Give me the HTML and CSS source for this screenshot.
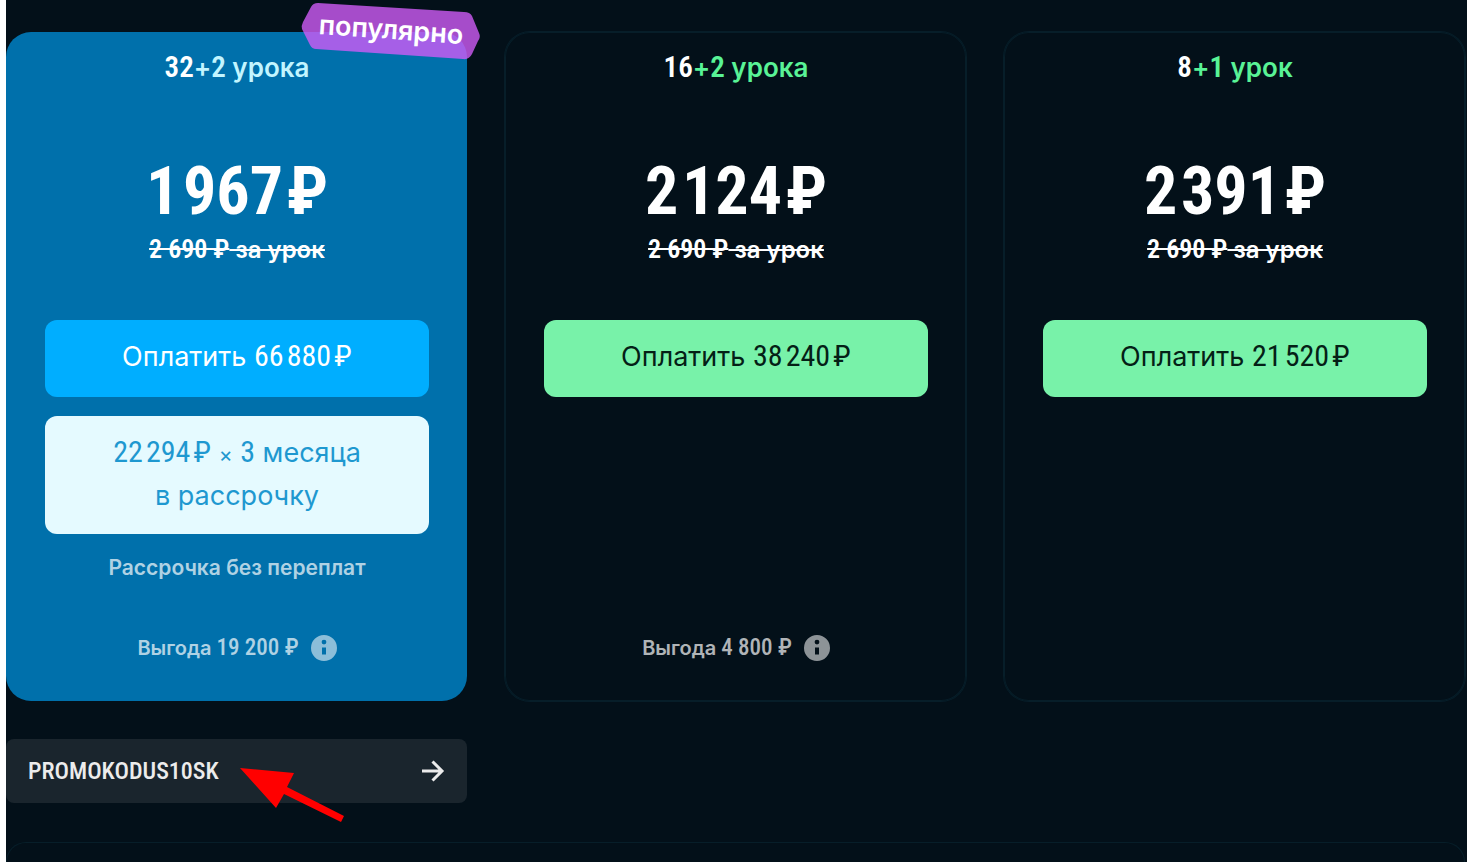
FILE: index.html
```html
<!DOCTYPE html>
<html lang="ru">
<head>
<meta charset="utf-8">
<meta name="viewport" content="width=device-width, initial-scale=1">
<title>Выбор пакета уроков</title>
<link rel="stylesheet" href="styles.css">
</head>
<body>
<main class="page">
  <section class="plans">
    <article class="plan plan-popular">
      <div class="badge">
        <svg class="badge-shape" viewBox="0 0 180 58" aria-hidden="true"><path d="M17 1 L163 10 Q169 10 171 14 L178 31 Q180 35 177 39 L171 52 Q168 58 162 57 L15 47 Q11 47 9 43 L1 27 Q0 24 2 20 L10 5 Q12 1 17 1Z"/></svg>
        <span class="badge-text">популярно</span>
      </div>
      <h2 class="title"><span class="num">32</span><span class="bonus">+<span class="num">2</span> урока</span></h2>
      <p class="price">1<span class="gap"> </span>967<span class="gap"> </span>₽</p>
      <p class="old"><s><span class="num">2 690 ₽</span> за урок</s></p>
      <div class="actions">
        <button class="btn btn-blue" type="button">Оплатить <span class="num">66&#8202;880&#8202;₽</span></button>
        <button class="btn btn-light" type="button"><span class="num">22&#8202;294&#8202;₽</span> <span class="times">×</span> <span class="num">3</span> месяца<br>в рассрочку</button>
      </div>
      <p class="note">Рассрочка без переплат</p>
      <p class="benefit"><span>Выгода <span class="num">19 200 ₽</span></span>
        <svg class="info" viewBox="0 0 26 26" aria-hidden="true"><path fill-rule="evenodd" d="M13 0a13 13 0 1 1 0 26a13 13 0 1 1 0-26ZM13 4.700a2.400 2.400 0 1 0 0 4.800a2.400 2.400 0 1 0 0-4.800ZM11 12.500V19.500H15V12.500Z"/></svg>
      </p>
    </article>
    <article class="plan">
      <h2 class="title"><span class="num">16</span><span class="bonus">+<span class="num">2</span> урока</span></h2>
      <p class="price">2<span class="gap"> </span>124<span class="gap"> </span>₽</p>
      <p class="old"><s><span class="num">2 690 ₽</span> за урок</s></p>
      <div class="actions">
        <button class="btn" type="button">Оплатить <span class="num">38&#8202;240&#8202;₽</span></button>
      </div>
      <p class="benefit"><span>Выгода <span class="num">4 800 ₽</span></span>
        <svg class="info" viewBox="0 0 26 26" aria-hidden="true"><path fill-rule="evenodd" d="M13 0a13 13 0 1 1 0 26a13 13 0 1 1 0-26ZM13 4.700a2.400 2.400 0 1 0 0 4.800a2.400 2.400 0 1 0 0-4.800ZM11 12.500V19.500H15V12.500Z"/></svg>
      </p>
    </article>
    <article class="plan">
      <h2 class="title"><span class="num">8</span><span class="bonus">+<span class="num">1</span> урок</span></h2>
      <p class="price">2<span class="gap"> </span>391<span class="gap"> </span>₽</p>
      <p class="old"><s><span class="num">2 690 ₽</span> за урок</s></p>
      <div class="actions">
        <button class="btn" type="button">Оплатить <span class="num">21&#8202;520&#8202;₽</span></button>
      </div>
    </article>
  </section>
  <div class="promo-row">
    <form class="promo">
      <input class="promo-input" type="text" value="PROMOKODUS10SK" aria-label="Промокод">
      <button class="promo-go" type="button" aria-label="Применить">
        <svg class="promo-icon" viewBox="0 0 24 24" aria-hidden="true"><path d="M1 12H20M11.500 2.500L21 12L11.500 21.500"/></svg>
      </button>
      <svg class="pointer" viewBox="0 0 104 56" aria-hidden="true"><path d="M0 1L54 6L47 20L104 49L101 55L44 27L36 41Z"/></svg>
    </form>
  </div>
  <section class="panel"></section>
</main>
</body>
</html>
```
FILE: styles.css
```css
* { box-sizing: border-box; }

body {
  margin: 0;
  background: #fff;
  font-family: Inter, "Open Sans", sans-serif;
  color: #fff;
}

h2, p { margin: 0; }

.page {
  min-height: 100vh;
  margin-left: 6px;
  padding: 32px 2px 0 0;
  background: #031019;
}

.plans, .promo-row {
  display: grid;
  grid-template-columns: repeat(3, 1fr);
  column-gap: 38px;
}

.plan {
  position: relative;
  display: flex;
  flex-direction: column;
  padding: 16px 38px 32px 39px;
  border-radius: 25px;
  box-shadow: 0 0 0 1px #071e29, inset 0 0 0 1px #071e29;
  text-align: center;
  --bonus: #59f396;
}

.plan-popular {
  background: #0070ab;
  box-shadow: none;
  --bonus: #c2f5ff;
}

.num {
  font-family: "Roboto Condensed", "Liberation Sans Narrow", Roboto, sans-serif;
  font-size: 30px;
  line-height: 1;
}

.title {
  font-size: 26px;
  font-weight: 600;
  line-height: 40px;
}

.title .num { font-size: 29px; }

.bonus { color: var(--bonus); }

.price {
  margin-top: 64px;
  font-family: "Roboto Condensed", "Liberation Sans Narrow", Roboto, sans-serif;
  font-size: 66px;
  font-weight: 700;
  line-height: 80px;
}

.gap {
  font-size: 16px;
  line-height: 1;
}

.old {
  margin-top: 2px;
  font-size: 24px;
  font-weight: 600;
  line-height: 32px;
}

.old .num { font-size: 26px; }

.old s { text-decoration-thickness: 2px; }

.actions {
  display: grid;
  gap: 19px;
  margin-top: 54px;
}

.btn {
  padding: 15px 12px 19px;
  border: 0;
  border-radius: 12px;
  background: #78f2a9;
  color: #042016;
  font-family: inherit;
  font-size: 27px;
  line-height: 43px;
}

.btn-blue {
  background: #00aeff;
  color: #fff;
}

.btn-light {
  padding: 15px 12px 17px;
  background: #e5faff;
  color: #1e98d0;
}

.times {
  font-size: 21px;
  line-height: 1;
}

.note {
  margin-top: 18px;
  font-size: 21px;
  font-weight: 600;
  line-height: 32px;
  color: rgba(255, 255, 255, .7);
}

.benefit {
  display: flex;
  align-items: center;
  justify-content: center;
  gap: 12px;
  margin-top: auto;
  padding-bottom: 5px;
  font-size: 20px;
  font-weight: 600;
  line-height: 32px;
  color: rgba(255, 255, 255, .7);
}

.benefit .num {
  font-size: 23px;
  font-weight: 500;
}

.note + .benefit { margin-top: 48px; }

.info {
  width: 26px;
  height: 26px;
  fill: #fff;
  opacity: .55;
}

.badge {
  position: absolute;
  top: -30px;
  right: -14px;
  width: 180px;
  height: 58px;
}

.badge-shape {
  display: block;
  fill: #cf5bf6;
  fill-opacity: .8;
}

.badge-text {
  position: absolute;
  inset: 0;
  font-size: 27px;
  font-weight: 600;
  line-height: 56px;
  transform: rotate(4deg);
}

.promo-row { margin-top: 38px; }

.promo {
  position: relative;
  display: flex;
  align-items: center;
  height: 64px;
  padding: 0 22px;
  border-radius: 8px;
  background: #1a252d;
}

.promo-input {
  flex: 1;
  min-width: 0;
  padding: 0;
  border: 0;
  outline: 0;
  background: none;
  color: #ececec;
  font-family: "Roboto Condensed", "Liberation Sans Narrow", Roboto, sans-serif;
  font-size: 24px;
  font-weight: 500;
}

.promo-go {
  display: flex;
  padding: 0;
  border: 0;
  background: none;
}

.promo-icon {
  width: 24px;
  height: 24px;
  fill: none;
  stroke: #ececec;
  stroke-width: 3;
}

.pointer {
  position: absolute;
  top: 28px;
  left: 234px;
  width: 104px;
  height: 56px;
  fill: #f00;
}

.panel {
  height: 20px;
  margin-top: 39px;
  border: 1px solid #071e29;
  border-bottom: 0;
  border-radius: 20px 20px 0 0;
}
```
